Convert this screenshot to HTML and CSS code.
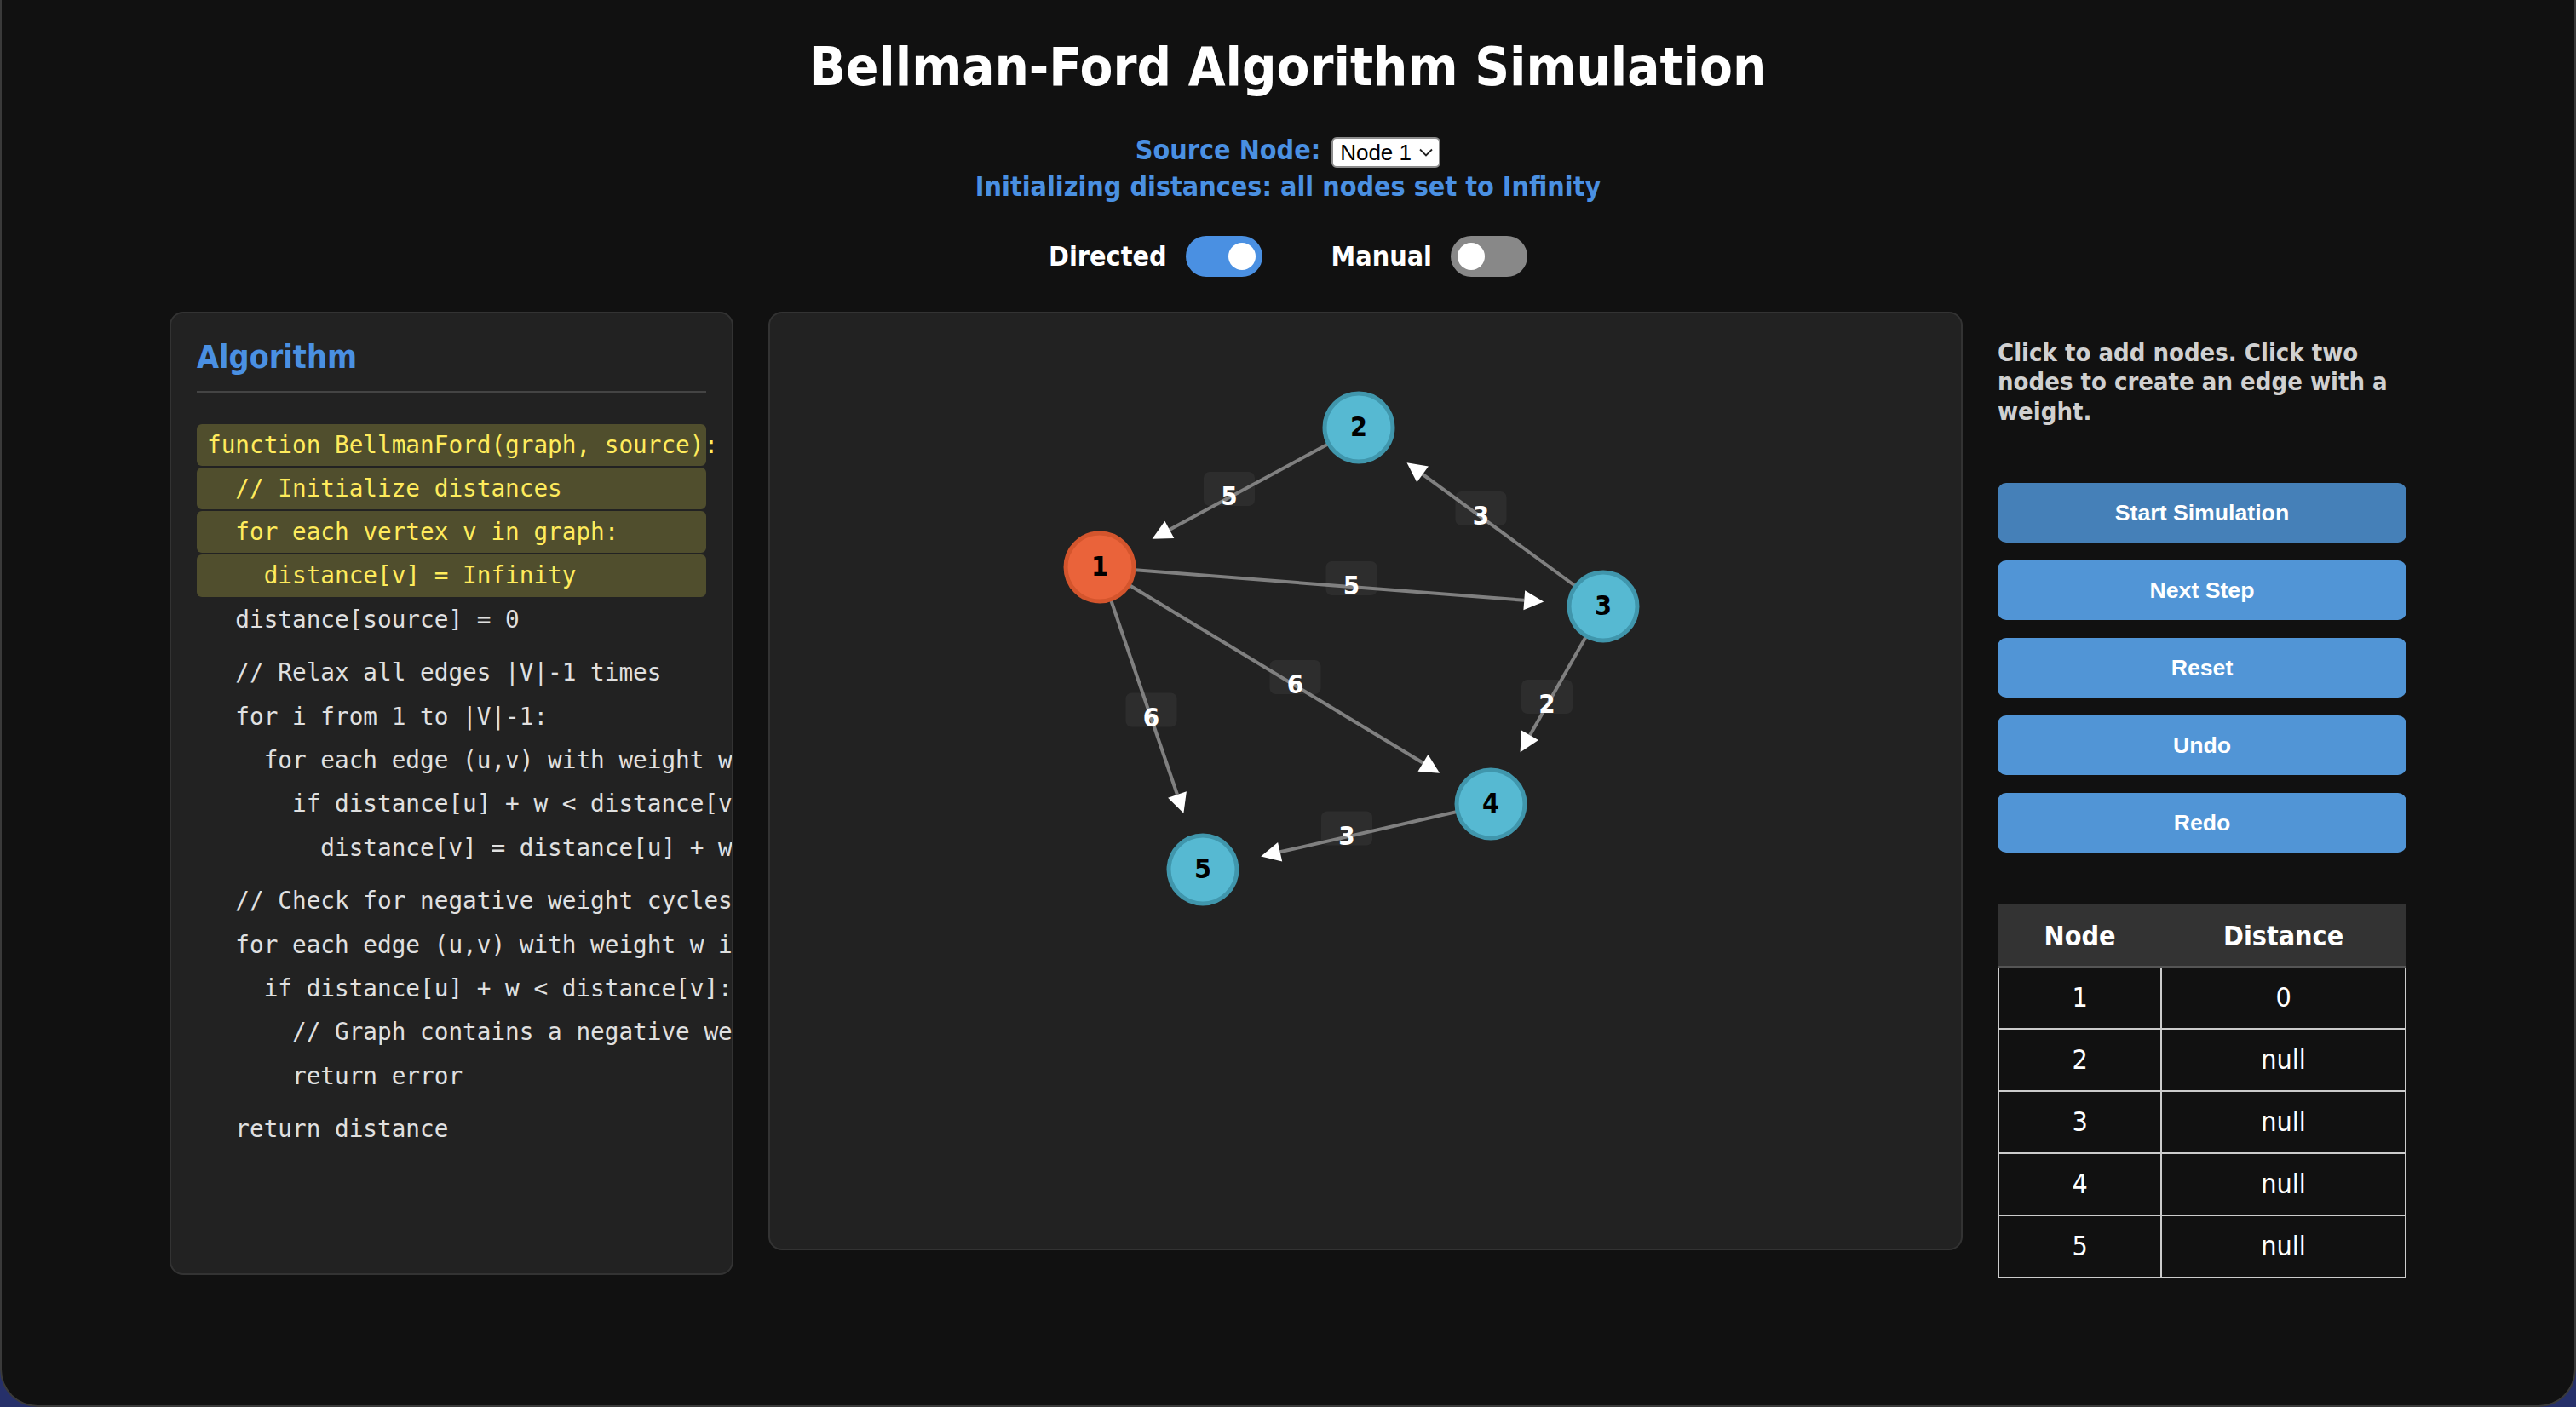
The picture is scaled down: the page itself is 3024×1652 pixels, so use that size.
FILE: index.html
```html
<!DOCTYPE html>
<html lang="en">
<head>
<meta charset="utf-8">
<title>Bellman-Ford Algorithm Simulation</title>
<link rel="stylesheet" href="styles.css">
</head>
<body>
<div class="window">
  <h1 class="title">Bellman-Ford Algorithm Simulation</h1>

  <div class="source-row">
    <span class="source-label">Source Node:</span>
    <div class="select-box">
      <span class="select-text">Node 1</span>
      <svg class="chevron" width="16" height="10" viewBox="0 0 16 10"><path d="M1 1.5 L8 8.5 L15 1.5" fill="none" stroke="#222" stroke-width="1.8"/></svg>
    </div>
  </div>
  <div class="status">Initializing distances: all nodes set to Infinity</div>

  <div class="toggles">
    <div class="toggle-group">
      <span class="toggle-label">Directed</span>
      <span class="switch on"><span class="knob"></span></span>
    </div>
    <div class="toggle-group">
      <span class="toggle-label">Manual</span>
      <span class="switch"><span class="knob"></span></span>
    </div>
  </div>

  <div class="main">
    <section class="code-panel">
      <h3 class="panel-title">Algorithm</h3>
      <div class="code">
        <div class="line hl">function BellmanFord(graph, source):</div>
        <div class="line hl">  // Initialize distances</div>
        <div class="line hl">  for each vertex v in graph:</div>
        <div class="line hl">    distance[v] = Infinity</div>
        <div class="line">  distance[source] = 0</div>
        <div class="blank"></div>
        <div class="line">  // Relax all edges |V|-1 times</div>
        <div class="line">  for i from 1 to |V|-1:</div>
        <div class="line">    for each edge (u,v) with weight w:</div>
        <div class="line">      if distance[u] + w &lt; distance[v]:</div>
        <div class="line">        distance[v] = distance[u] + w</div>
        <div class="blank"></div>
        <div class="line">  // Check for negative weight cycles</div>
        <div class="line">  for each edge (u,v) with weight w in graph:</div>
        <div class="line">    if distance[u] + w &lt; distance[v]:</div>
        <div class="line">      // Graph contains a negative weight cycle</div>
        <div class="line">      return error</div>
        <div class="blank"></div>
        <div class="line">  return distance</div>
      </div>
    </section>

    <div class="canvas">
      <svg class="graph" width="1398" height="1098" viewBox="0 0 1398 1098">
        <g>
          <rect class="wbox" x="509" y="186" width="60" height="40" rx="7"/>
          <rect class="wbox" x="804.5" y="209" width="60" height="40" rx="7"/>
          <rect class="wbox" x="652.5" y="291" width="60" height="40" rx="7"/>
          <rect class="wbox" x="586.5" y="407" width="60" height="40" rx="7"/>
          <rect class="wbox" x="882" y="430" width="60" height="40" rx="7"/>
          <rect class="wbox" x="417.5" y="445.5" width="60" height="40" rx="7"/>
          <rect class="wbox" x="647" y="584.5" width="60" height="40" rx="7"/>
        </g>
        <g>
          <line class="edge" x1="691" y1="134" x2="468.8" y2="253.9"/>
          <line class="edge" x1="978" y1="344" x2="766.1" y2="188.9"/>
          <line class="edge" x1="387" y1="298" x2="885.3" y2="336.8"/>
          <line class="edge" x1="387" y1="298" x2="766.5" y2="527.8"/>
          <line class="edge" x1="978" y1="344" x2="892.0" y2="495.2"/>
          <line class="edge" x1="387" y1="298" x2="478.0" y2="565.0"/>
          <line class="edge" x1="846" y1="576" x2="598.7" y2="632.3"/>
        </g>
        <g>
          <polygon class="arrow" points="448.6,264.8 463.4,243.8 474.3,264.0"/>
          <polygon class="arrow" points="747.5,175.3 772.9,179.6 759.3,198.2"/>
          <polygon class="arrow" points="908.2,338.6 884.4,348.3 886.2,325.3"/>
          <polygon class="arrow" points="786.1,539.7 760.5,537.7 772.4,518.0"/>
          <polygon class="arrow" points="880.6,515.2 882.0,489.5 902.0,500.9"/>
          <polygon class="arrow" points="485.4,586.7 467.1,568.7 488.9,561.3"/>
          <polygon class="arrow" points="576.2,637.5 596.1,621.1 601.2,643.6"/>
        </g>
        <g>
          <text class="wtext" x="539" y="214">5</text>
          <text class="wtext" x="834.5" y="237">3</text>
          <text class="wtext" x="682.5" y="319">5</text>
          <text class="wtext" x="616.5" y="435">6</text>
          <text class="wtext" x="912" y="458">2</text>
          <text class="wtext" x="447.5" y="473.5">6</text>
          <text class="wtext" x="677" y="612.5">3</text>
        </g>
        <g>
          <circle class="node src" cx="387" cy="298" r="40"/>
          <text class="ntext" x="387" y="297">1</text>
          <circle class="node std" cx="691" cy="134" r="40"/>
          <text class="ntext" x="691" y="133">2</text>
          <circle class="node std" cx="978" cy="344" r="40"/>
          <text class="ntext" x="978" y="343">3</text>
          <circle class="node std" cx="846" cy="576" r="40"/>
          <text class="ntext" x="846" y="575">4</text>
          <circle class="node std" cx="508" cy="653" r="40"/>
          <text class="ntext" x="508" y="652">5</text>
        </g>
      </svg>
    </div>

    <aside class="side">
      <p class="hint">Click to add nodes. Click two nodes to create an edge with a weight.</p>
      <div class="buttons">
        <button class="btn btn-start">Start Simulation</button>
        <button class="btn">Next Step</button>
        <button class="btn">Reset</button>
        <button class="btn">Undo</button>
        <button class="btn">Redo</button>
      </div>
      <table class="dist-table">
        <thead>
          <tr><th class="col-node">Node</th><th>Distance</th></tr>
        </thead>
        <tbody>
          <tr><td>1</td><td>0</td></tr>
          <tr><td>2</td><td>null</td></tr>
          <tr><td>3</td><td>null</td></tr>
          <tr><td>4</td><td>null</td></tr>
          <tr><td>5</td><td>null</td></tr>
        </tbody>
      </table>
    </aside>
  </div>
</div>
</body>
</html>
```

FILE: styles.css
```css
html, body {
  margin: 0;
  padding: 0;
}

body {
  width: 3024px;
  height: 1652px;
  overflow: hidden;
  background: #26306a;
  font-family: "DejaVu Sans Condensed", "DejaVu Sans", sans-serif;
  font-stretch: semi-condensed;
  color: #fff;
}

.window {
  box-sizing: border-box;
  width: 3024px;
  height: 1652px;
  background: #111;
  border: 2px solid #3a3a3a;
  border-top: none;
  border-radius: 0 0 44px 44px;
  padding-top: 40px;
  overflow: hidden;
}

.title {
  margin: 0;
  font-size: 63px;
  line-height: 77px;
  font-weight: bold;
  text-align: center;
  color: #fff;
}

.source-row {
  display: flex;
  justify-content: center;
  align-items: flex-start;
  gap: 13px;
  height: 36px;
  margin-top: 44px;
}

.source-label {
  font-size: 32px;
  line-height: 30px;
  font-weight: bold;
  color: #4a90e2;
}

.select-box {
  box-sizing: border-box;
  width: 128px;
  height: 36px;
  background: #fff;
  border: 2px solid #8c8c8c;
  border-radius: 6px;
  display: flex;
  align-items: center;
  justify-content: space-between;
  padding: 0 7px 0 8px;
  font-family: "Liberation Sans", Arial, sans-serif;
  font-stretch: normal;
  font-size: 26px;
  color: #000;
}

.chevron {
  display: block;
}

.status {
  margin-top: 3px;
  font-size: 32px;
  line-height: 38px;
  font-weight: bold;
  color: #4a90e2;
  text-align: center;
}

.toggles {
  display: flex;
  justify-content: center;
  align-items: center;
  gap: 81px;
  height: 48px;
  margin-top: 39px;
}

.toggle-group {
  display: flex;
  align-items: center;
  gap: 22px;
}

.toggle-label {
  font-size: 32px;
  line-height: 40px;
  font-weight: bold;
  color: #fff;
}

.switch {
  box-sizing: border-box;
  width: 90px;
  height: 48px;
  border-radius: 24px;
  background: #888;
  display: flex;
  align-items: center;
  padding: 0 8px;
}

.switch.on {
  background: #4a90e2;
  justify-content: flex-end;
}

.knob {
  width: 32px;
  height: 32px;
  border-radius: 50%;
  background: #fff;
}

.main {
  display: flex;
  justify-content: center;
  align-items: flex-start;
  gap: 41px;
  margin-top: 41px;
}

.code-panel {
  box-sizing: border-box;
  width: 662px;
  height: 1131px;
  flex: none;
  background: #222;
  border: 2px solid #333;
  border-radius: 16px;
  padding: 30px;
  overflow: hidden;
}

.panel-title {
  margin: 0;
  font-size: 37.4px;
  line-height: 43.5px;
  font-weight: bold;
  color: #4a90e2;
  padding-bottom: 17px;
  border-bottom: 2px solid #444;
}

.code {
  margin-top: 37px;
  font-family: "DejaVu Sans Mono", "Liberation Mono", monospace;
  font-stretch: normal;
  font-size: 27.7px;
  color: #e0e0e0;
}

.line {
  white-space: pre;
  padding: 4px 12px;
  line-height: 41.3px;
  margin-bottom: 2px;
  border-radius: 6px;
}

.line.hl {
  background: #504e2d;
  color: #ffeb5c;
}

.blank {
  height: 9.5px;
  margin-bottom: 2px;
}

.canvas {
  box-sizing: border-box;
  width: 1402px;
  height: 1102px;
  flex: none;
  background: #222;
  border: 2px solid #333;
  border-radius: 16px;
  overflow: hidden;
}

.graph {
  display: block;
}

.wbox {
  fill: #2d2d2d;
}

.edge {
  stroke: #808080;
  stroke-width: 4;
}

.arrow {
  fill: #fff;
}

.wtext {
  fill: #fff;
  font-size: 31px;
  font-weight: bold;
  text-anchor: middle;
  dominant-baseline: central;
}

.node {
  stroke-width: 5;
}

.node.src {
  fill: #ea633a;
  stroke: #d4552d;
}

.node.std {
  fill: #56b9d2;
  stroke: #4096ac;
}

.ntext {
  fill: #000;
  font-size: 32px;
  font-weight: bold;
  text-anchor: middle;
  dominant-baseline: central;
}

.side {
  width: 480px;
  flex: none;
}

.hint {
  margin: 30.7px 0 0;
  font-size: 29px;
  line-height: 34.5px;
  font-weight: bold;
  color: #d0d0d0;
}

.buttons {
  display: flex;
  flex-direction: column;
  gap: 20.5px;
  margin-top: 66.8px;
}

.btn {
  display: block;
  width: 100%;
  height: 70.5px;
  border: none;
  border-radius: 10px;
  background: #5195d6;
  color: #fff;
  font-family: "Liberation Sans", Arial, sans-serif;
  font-stretch: normal;
  font-size: 26.67px;
  font-weight: bold;
  padding: 0;
}

.btn-start {
  background: #4580b8;
}

.dist-table {
  width: 480px;
  margin-top: 60.5px;
  border-collapse: collapse;
  font-size: 32px;
}

.dist-table th {
  height: 70px;
  padding: 0;
  background: #333;
  color: #fff;
  font-weight: bold;
  border: 2px solid #333;
  border-bottom-color: #555;
}

.dist-table .col-node {
  width: 40%;
}

.dist-table td {
  height: 71px;
  padding: 0;
  text-align: center;
  color: #fff;
  border: 2px solid #ccc;
}
```
